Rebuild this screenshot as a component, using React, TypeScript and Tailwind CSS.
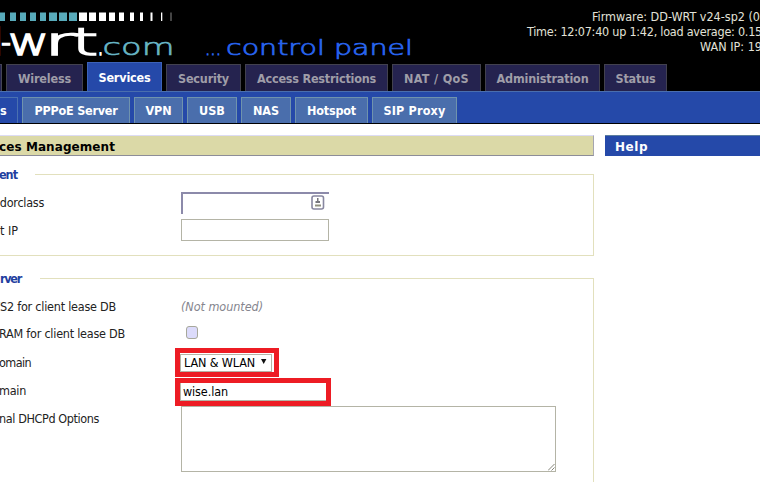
import { useLayoutEffect, useRef, useState } from 'react';
import clsx from 'clsx';

/** One line of text whose tracking is adjusted so that it is `w` pixels wide. */
function Line({ w, className, children }: { w: number; className?: string; children: string }) {
  const ref = useRef<HTMLSpanElement>(null);
  const [tracking, setTracking] = useState(0);
  useLayoutEffect(() => {
    const natural = ref.current!.getBoundingClientRect().width;
    setTracking((w - natural) / children.length);
  }, []);
  return (
    <span ref={ref} className={clsx('inline-block shrink-0 whitespace-pre', className)} style={{ letterSpacing: tracking }}>
      {children}
    </span>
  );
}

const tabs = [
  { label: 'Wireless', text: 53, box: 'w-[77px]' },
  { label: 'Services', text: 52, box: 'w-[75px]' },
  { label: 'Security', text: 51, box: 'w-[75px]' },
  { label: 'Access Restrictions', text: 119, box: 'w-[143px]' },
  { label: 'NAT / QoS', text: 65, box: 'w-[89px]' },
  { label: 'Administration', text: 92, box: 'w-[115px]' },
  { label: 'Status', text: 40, box: 'w-[63px]' },
];

const subTabs = [
  { label: 'PPPoE Server', text: 83, box: 'w-[108px]' },
  { label: 'VPN', text: 26, box: 'w-[49px]' },
  { label: 'USB', text: 26, box: 'w-[50px]' },
  { label: 'NAS', text: 26, box: 'w-[50px]' },
  { label: 'Hotspot', text: 49, box: 'w-[73px]' },
  { label: 'SIP Proxy', text: 62, box: 'w-[85px]' },
];

const bars = [
  [0, 5], [10, 6], [20, 6], [30, 6], [40, 6], [49, 8], [59, 8], [69, 8],
  [79, 8], [89, 7], [99, 7], [109, 6], [119, 5], [130, 4], [140, 3], [150.5, 2], [161, 1.3], [170, 2],
];

function Logo() {
  return (
    <svg width="430" height="62" className="block shrink-0" fontFamily='"DejaVu Sans Light","DejaVu Sans"' fontWeight="200">
      {bars.map(([x, w], i) => (
        <rect key={x} x={x} y="12.5" width={w} height="8.5" fill={i < 8 ? '#58aaba' : i === 17 ? '#444' : '#fff'} />
      ))}
      <g fill="#fff" stroke="#fff" strokeWidth="1.6" fontSize="38">
        <text x="-25" y="55" textLength="29" lengthAdjust="spacingAndGlyphs">d</text>
        <text x="1" y="55" textLength="10" lengthAdjust="spacingAndGlyphs">-</text>
        <text x="8" y="55" textLength="41" lengthAdjust="spacingAndGlyphs">w</text>
        <text x="44" y="55" textLength="32" lengthAdjust="spacingAndGlyphs">r</text>
        <text x="72" y="55" textLength="26" lengthAdjust="spacingAndGlyphs">t</text>
        <text x="97" y="55" textLength="7" lengthAdjust="spacingAndGlyphs">.</text>
      </g>
      <text x="102.5" y="55" fontSize="22.5" fill="#67b5c5" stroke="#67b5c5" strokeWidth="0.6" textLength="72" lengthAdjust="spacingAndGlyphs">com</text>
      <text x="205" y="55" fontSize="21" fill="#2864ee" stroke="#2864ee" strokeWidth="1" textLength="16" lengthAdjust="spacingAndGlyphs">...</text>
      <text x="226" y="55" fontSize="21" fill="#2864ee" stroke="#2864ee" strokeWidth="0.7" textLength="187" lengthAdjust="spacingAndGlyphs">control panel</text>
    </svg>
  );
}

function Label({ w, end, children }: { w: number; end: string; children: string }) {
  return (
    <div className="flex w-[181px] shrink-0 overflow-hidden">
      <div className={clsx('flex shrink-0 justify-end', end)}>
        <Line w={w}>{children}</Line>
      </div>
    </div>
  );
}

export default function App() {
  return (
    <div className="h-[482px] w-[760px] overflow-hidden bg-white font-['DejaVu_Sans_Condensed','DejaVu_Sans',sans-serif] text-[12.5px] leading-[15px] text-[#222] [font-stretch:condensed]">
      <header className="flex h-[62px] overflow-hidden bg-black">
        <Logo />
        <div className="w-[330px] shrink-0 pt-[9px] text-[#e2e2d8]">
          <div className="flex pl-[162px]"><Line w={168}>Firmware: DD-WRT v24-sp2 (0</Line></div>
          <div className="flex pl-[97px]"><Line w={235}>Time: 12:07:40 up 1:42, load average: 0.15</Line></div>
          <div className="flex pl-[270px]"><Line w={62}>WAN IP: 19</Line></div>
        </div>
      </header>

      <nav className="flex h-[29px] items-end gap-1 overflow-hidden bg-black text-[12.5px] font-bold">
        <div className="h-[27px] w-[2px] shrink-0 border-t border-r border-[#444455] bg-[#25234f]" />
        {tabs.map((t) => (
          <div
            key={t.label}
            className={clsx(
              'flex shrink-0 justify-center border-x border-t',
              t.box,
              t.label === 'Services'
                ? 'h-[29px] border-[#3c62b8] bg-[#2549a9] pt-[7px] text-white'
                : 'h-[27px] border-[#42414e] bg-[#25234f] pt-[6px] text-[#9f9da8]',
            )}
          >
            <Line w={t.text}>{t.label}</Line>
          </div>
        ))}
      </nav>

      <nav className="flex h-[33px] items-end gap-1 border-t border-b border-t-[#4a6eae] border-b-black bg-[#2549a9] text-[12.5px] font-bold text-white">
        <div className="flex h-[26px] w-[18px] shrink-0 border-t border-r border-[#4a70b0] pt-[5px]"><Line w={7}>s</Line></div>
        {subTabs.map((t) => (
          <div key={t.label} className={clsx('flex h-[26px] shrink-0 justify-center border-x border-t border-[#6f93ad] bg-[#4a6eac] pt-[5px]', t.box)}>
            <Line w={t.text}>{t.label}</Line>
          </div>
        ))}
      </nav>

      <div className="flex items-start pt-[11px]">
        <main className="w-[594px] shrink-0">
          <h2 className="flex h-[21px] border-t border-r border-b border-t-[#dddcf4] border-r-[#a5a5b0] border-b-[#8d8d98] bg-[#dbd9a7] pt-[4px] font-['DejaVu_Sans',sans-serif] text-[12px] font-bold text-black [font-stretch:normal]">
            <Line w={116} className="-ml-px">ces Management</Line>
          </h2>

          <section className="mt-[11px] h-[89px]">
            <div className="flex h-[15px] items-start">
              <div className="flex w-[35px] shrink-0 font-bold text-[#1f3f9f]"><Line w={18} className="-ml-px">ent</Line></div>
              <div className="mt-[7px] h-[9px] flex-1 border-t border-r border-[#e2e0bd]" />
            </div>
            <div className="flex h-[74px] flex-col border-r border-b border-[#e2e0bd] pt-[10px]">
              <div className="flex h-[27px] items-start">
                <div className="pt-[3px]"><Label w={51} end="w-[44px]">ndorclass</Label></div>
                <div className="flex h-[22px] w-[148px] justify-end border-t-2 border-l-2 border-[#8c8aaa] pt-px pr-[4px]">
                  <svg width="14" height="15" viewBox="0 0 14 15" fill="none">
                    <rect x="1" y="1" width="11.5" height="13" rx="2" stroke="#8887a0" strokeWidth="1.6" />
                    <path d="M6 3h1.5v3H9v2H4.5V6H6z" fill="#77777d" />
                    <path d="M4 10.5h6" stroke="#90907f" strokeWidth="2" />
                  </svg>
                </div>
              </div>
              <div className="flex items-start">
                <div className="pt-[4px]"><Label w={18} end="w-[18px]">t IP</Label></div>
                <div className="h-[22px] w-[148px] border border-[#b4b4a6]" />
              </div>
            </div>
          </section>

          <section className="mt-[15px]">
            <div className="flex h-[15px] items-start">
              <div className="flex w-[40px] shrink-0 font-bold text-[#1f3f9f]"><Line w={21}>rver</Line></div>
              <div className="mt-[7px] h-[9px] flex-1 border-t border-r border-[#e2e0bd]" />
            </div>
            <div className="flex h-[200px] flex-col border-r border-[#e2e0bd] pt-[13px]">
              <div className="flex h-[27px]">
                <Label w={122} end="w-[116px]">FS2 for client lease DB</Label>
                <Line w={82} className="text-[#85858e] italic">(Not mounted)</Line>
              </div>
              <div className="flex h-[29px]">
                <Label w={126} end="w-[125px]">RAM for client lease DB</Label>
                <div className="ml-[5px] h-[13px] w-[12px] rounded-[3px] border border-[#a7a89b] bg-[#dcdbfb]" />
              </div>
              <div className="flex h-[28px]">
                <Label w={32} end="w-[31px]">omain</Label>
                <div className="-mt-[7px] -ml-[6px] flex h-[29px] w-[104px] items-center border-[5px] border-[#ed1c24]">
                  <div className="flex h-[18px] w-[92px] items-center border border-[#b4b4a6] pl-[3px] text-black">
                    <Line w={71}>LAN &amp; WLAN</Line>
                    <svg width="6" height="5" className="mb-[2px] ml-[6px]"><path d="M0 0h5.4L2.7 5z" fill="#111" /></svg>
                  </div>
                </div>
              </div>
              <div className="flex h-[28px]">
                <Label w={27} end="w-[26px]">main</Label>
                <div className="-mt-[5px] -ml-[6px] flex h-[28px] w-[156px] items-center border-[5px] border-[#ed1c24]">
                  <div className="flex h-[18px] w-[146px] items-center border-b border-l border-[#b4b4a6] pl-[2px] text-black">
                    <Line w={45}>wise.lan</Line>
                  </div>
                </div>
              </div>
              <div className="flex">
                <Label w={100} end="w-[99px]">nal DHCPd Options</Label>
                <div className="-mt-[5px] flex h-[66px] w-[375px] items-end justify-end border border-[#b4b4a6]">
                  <svg width="7" height="7" fill="none" stroke="#85857a"><path d="M0 6.5 6.5 0M3.5 6.5l3-3" /></svg>
                </div>
              </div>
            </div>
          </section>
        </main>

        <aside className="ml-[11px] flex-1">
          <h2 className="flex h-[21px] border-t border-t-[#5b7d9f] bg-[#2549a9] pt-[4px] pl-[10px] font-['DejaVu_Sans',sans-serif] text-[12px] font-bold text-white [font-stretch:normal]">
            <Line w={33}>Help</Line>
          </h2>
        </aside>
      </div>
    </div>
  );
}
